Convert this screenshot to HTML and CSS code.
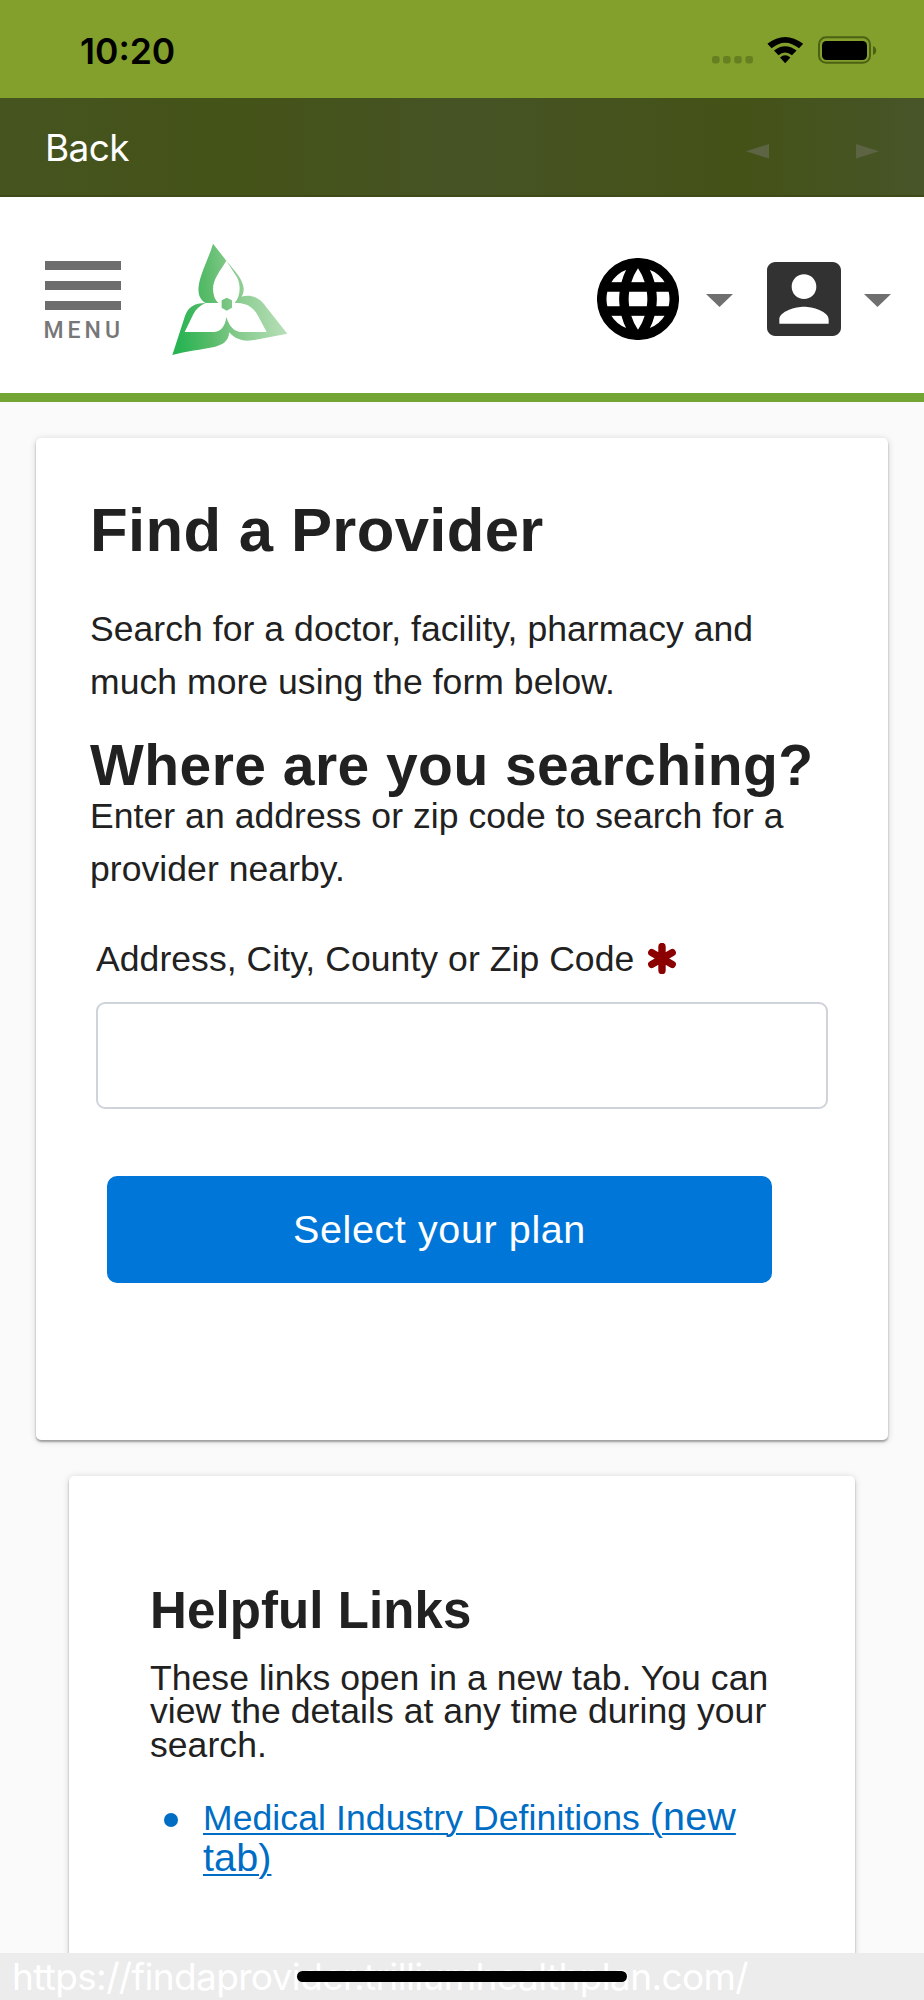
FILE: index.html
```html
<!DOCTYPE html>
<html lang="en">
<head>
<meta charset="utf-8">
<title>Find a Provider</title>
<link rel="stylesheet" href="styles.css">
</head>
<body>
<div class="screen">
  <div class="status">
    <span class="time">10:20</span>
    <svg class="status-icons" width="168" height="30" viewBox="710 35 168 30">
      <g fill="#668021"><rect x="712" y="56" width="7.6" height="7.4" rx="2.4"/><rect x="723" y="56" width="7.6" height="7.4" rx="2.4"/><rect x="734.2" y="56" width="7.6" height="7.4" rx="2.4"/><rect x="745.4" y="56" width="7.6" height="7.4" rx="2.4"/></g>
      <path d="M767.4 43.8Q785 30 803.2 43.8L799 48.3Q785 37 771.6 48.3Z"/>
      <path d="M774 50.6Q785 41.8 796.6 50.6L792 55.2Q785 49.8 778.4 55.2Z"/>
      <path d="M780 57.4Q785 53.2 790.4 57.4L785.2 63.2Z"/>
      <rect x="819" y="37.3" width="51" height="25.4" rx="7" fill="none" stroke="#4d6115" stroke-width="2"/>
      <rect x="822" y="41" width="45" height="19" rx="4.5"/>
      <path d="M873 46Q876.200 47 876.200 50.500T873 55Z" fill="#4d6115"/>
    </svg>
  </div>
  <nav class="toolbar">
    <span class="back">Back</span>
    <svg class="arrows" width="133" height="15" viewBox="0 0 133 15" fill="#5c6443"><path d="M0 7.300L23 0V14.600ZM133 7.300L110 0V14.600Z"/></svg>
  </nav>
  <header class="header">
    <div class="menu">
      <i class="bar"></i><i class="bar"></i><i class="bar"></i>
      <span class="menu-label">MENU</span>
    </div>
    <svg class="logo" width="160" height="140" viewBox="0 0 480 420">
      <defs><linearGradient id="g" gradientUnits="userSpaceOnUse" x1="85" y1="300" x2="400" y2="270"><stop offset="0" stop-color="#29b454"/><stop offset=".3" stop-color="#58bb69"/><stop offset=".55" stop-color="#84ca8b"/><stop offset="1" stop-color="#b5deb6"/></linearGradient></defs>
      <g fill="url(#g)">
        <path d="M189 41L229 92C211 122 190 145 189 176C190 198 196 211 206 219H167C151 211 143 193 146 169C150 132 176 86 189 41Z"/>
        <path d="M229 92C254 122 278 147 281 174C282 186 278 194 275 200C288 196 309 196 325 207C336 214 343 223 348 230L412 311L325 328C296 334 263 337 238 307C235 335 218 344 196 350C154 359 108 363 67 375L105 258C114 232 133 219 167 219C150 226 137 238 130 253L104 306H190C212 306 226 288 229 261C237 286 250 306 276 306H350L324 257C306 225 284 219 254 219C270 201 274 170 262 143Z"/>
        <path d="M215 211L230 203L246 211V233L230 242L215 233Z"/>
      </g>
    </svg>
    <div class="tools">
      <svg class="globe" width="82" height="82" viewBox="1.830 1.830 20.340 20.340"><path stroke="#000" stroke-width=".35" d="M11.990 2C6.470 2 2 6.480 2 12s4.470 10 9.990 10C17.520 22 22 17.520 22 12S17.520 2 11.990 2zm6.930 6h-2.950c-.32-1.250-.78-2.450-1.380-3.560 1.840.63 3.370 1.910 4.330 3.560zM12 4.040c.83 1.200 1.480 2.530 1.910 3.960h-3.820c.43-1.430 1.080-2.760 1.910-3.960zM4.260 14C4.100 13.360 4 12.690 4 12s.1-1.360.26-2h3.380c-.08.66-.14 1.320-.14 2 0 .68.06 1.340.14 2H4.260zm.82 2h2.950c.32 1.250.78 2.450 1.380 3.560-1.840-.63-3.370-1.900-4.330-3.560zm2.950-8H5.080c.96-1.660 2.490-2.930 4.330-3.560C8.810 5.550 8.350 6.750 8.030 8zM12 19.960c-.83-1.200-1.480-2.530-1.910-3.960h3.820c-.43 1.430-1.080 2.760-1.910 3.960zM14.340 14H9.660c-.09-.66-.16-1.320-.16-2 0-.68.07-1.350.16-2h4.680c.09.65.16 1.320.16 2 0 .68-.07 1.340-.16 2zm.25 5.560c.6-1.110 1.060-2.310 1.380-3.560h2.950c-.96 1.650-2.490 2.930-4.330 3.560zM16.360 14c.08-.66.14-1.320.14-2 0-.68-.06-1.340-.14-2h3.380c.16.64.26 1.310.26 2s-.1 1.360-.26 2h-3.380z"/></svg>
      <svg class="caret" width="27" height="13" viewBox="0 0 27 13"><path d="M0 0H27L13.500 13Z" fill="#6f6f6f"/></svg>
      <svg class="account" width="74" height="74" viewBox="3 3 18 18"><path fill="#323232" d="M3 5v14c0 1.100.89 2 2 2h14c1.100 0 2-.9 2-2V5c0-1.100-.9-2-2-2H5c-1.110 0-2 .9-2 2zm12 4c0 1.660-1.340 3-3 3s-3-1.340-3-3 1.340-3 3-3 3 1.340 3 3zm-9 8c0-2 4-3.100 6-3.100s6 1.100 6 3.100v1H6v-1z"/></svg>
      <svg class="caret" width="27" height="13" viewBox="0 0 27 13"><path d="M0 0H27L13.500 13Z" fill="#6f6f6f"/></svg>
    </div>
  </header>
  <main class="page">
    <section class="card search">
      <h1 class="title">Find a Provider</h1>
      <p class="text">Search for a doctor, facility, pharmacy and<br>much more using the form below.</p>
      <h2 class="subtitle">Where are you searching?</h2>
      <p class="text">Enter an address or zip code to search for a<br>provider nearby.</p>
      <label class="label" for="addr">Address, City, County or Zip Code
        <svg class="star" width="30" height="31" viewBox="0 0 30 31"><path d="M15 3.500V27.500M4.800 9.600L25.200 21.400M25.200 9.600L4.800 21.400" stroke="#8b0000" stroke-width="7.400" stroke-linecap="round"/></svg>
      </label>
      <input class="field" id="addr" type="text">
      <button class="button" type="button">Select your plan</button>
    </section>
    <section class="card links">
      <h3 class="links-title">Helpful Links</h3>
      <p class="links-text">These links open in a new tab. You can<br>view the details at any time during your<br>search.</p>
      <div class="link-row">
        <i class="bullet"></i>
        <a class="link">Medical Industry Definitions <span class="newtab">(new<br>tab)</span></a>
      </div>
    </section>
  </main>
  <footer class="urlbar"><span class="url">https://findaprovider.trilliumhealthplan.com/</span><i class="home"></i></footer>
</div>
</body>
</html>
```
FILE: styles.css
```css
* { box-sizing: border-box; }
body { margin: 0; }
h1, h2, h3, p { margin: 0; }
.screen { width: 924px; height: 2000px; overflow: hidden; display: flex; flex-direction: column; background: #fafafa; color: #212121; font-family: "Liberation Sans", Arial, sans-serif; }
.status { flex: none; height: 98px; padding: 0 46px 0 80px; display: flex; justify-content: space-between; background: #82a02b; }
.time { margin-top: 29.500px; font: 600 35.5px/43px Inter, sans-serif; color: #000; }
.status-icons { margin-top: 35px; }
.toolbar { flex: none; height: 99px; padding: 0 45px 0 45px; display: flex; justify-content: space-between; border-bottom: 2px solid #3e4a19; background: linear-gradient(90deg, #465420 0, #445317 25%, #465325 50%, #445217 80%, #475529 100%); }
.back { margin-top: 28px; font: 400 37px/44px Inter, sans-serif; letter-spacing: -.6px; color: #fff; }
.arrows { margin-top: 45.500px; }
.header { flex: none; height: 205px; padding: 0 33px 0 44.500px; display: flex; background: #fff; border-bottom: 9px solid #72a533; }
.menu { width: 76px; padding-top: 64px; display: flex; flex-direction: column; gap: 11px; }
.bar { height: 9px; background: #6d6d6d; }
.menu-label { margin: -4px 0 0 -1px; font: 500 23px/27px Roboto, sans-serif; letter-spacing: 4px; color: #777; white-space: nowrap; }
.logo { margin: 33px 0 0 29.500px; }
.tools { flex: 1; height: 84px; margin-top: 60px; display: flex; justify-content: flex-end; align-items: center; }
.caret { margin: 2px 0 0 27px; }
.account { margin-left: 34px; }
.tools .account + .caret { margin-left: 23px; }
.page { flex: 1; min-height: 0; overflow: hidden; padding-top: 36px; }
.card { background: #fff; border-radius: 5px; box-shadow: 0 2px 2px rgba(0,0,0,.3), 0 1px 7px rgba(0,0,0,.17); }
.search { width: 852px; height: 1002px; margin: 0 auto 36px; padding: 61px 54px 0; display: flex; flex-direction: column; align-items: flex-start; white-space: nowrap; }
.title { font-size: 61.600px; line-height: 62px; letter-spacing: .35px; margin-bottom: 42px; }
.text { font-size: 35.500px; line-height: 53.400px; letter-spacing: .065px; }
.subtitle { margin: 31px 0 1px; font-size: 57px; line-height: 48px; letter-spacing: .45px; }
.label { margin: 36px 0 16.800px 6px; font-size: 35.500px; line-height: 53px; letter-spacing: .07px; display: flex; }
.star { margin: 10px 0 0 12.500px; }
.field { width: 732px; height: 107px; margin-left: 6px; border: 2px solid #ced4da; border-radius: 9px; background: #fff; }
.button { width: 665px; height: 107px; margin: 67px 0 0 17px; padding: 0 0 2px; border: 0; border-radius: 10px; background: #0076d9; color: #fff; font: 39.500px/46px "Liberation Sans", Arial, sans-serif; letter-spacing: .6px; }
.links { width: 786px; height: 600px; margin: 0 auto; padding: 109px 81px 0; white-space: nowrap; }
.links-title { font-size: 51px; line-height: 52px; letter-spacing: .1px; }
.links-text { margin-top: 24.500px; font-size: 35.500px; line-height: 33.500px; letter-spacing: .065px; }
.link-row { display: flex; margin-top: 35px; padding-left: 14px; color: #006dc5; }
.bullet { width: 14px; height: 14px; margin: 16px 25px 0 0; border-radius: 50%; background: #006dc5; }
.link { font-size: 35.500px; line-height: 39px; letter-spacing: .1px; text-decoration: underline; text-decoration-thickness: 2px; text-underline-offset: 3px; }
.newtab { font-size: 39.500px; }
.urlbar { position: relative; flex: none; height: 47px; padding-left: 12px; background: #ececec; overflow: hidden; }
.url { display: block; color: #fff; font: 400 37px/47px Inter, sans-serif; letter-spacing: -.65px; white-space: nowrap; }
.home { position: absolute; left: 297px; top: 18px; width: 330px; height: 11px; border-radius: 6px; background: #000; }
```
